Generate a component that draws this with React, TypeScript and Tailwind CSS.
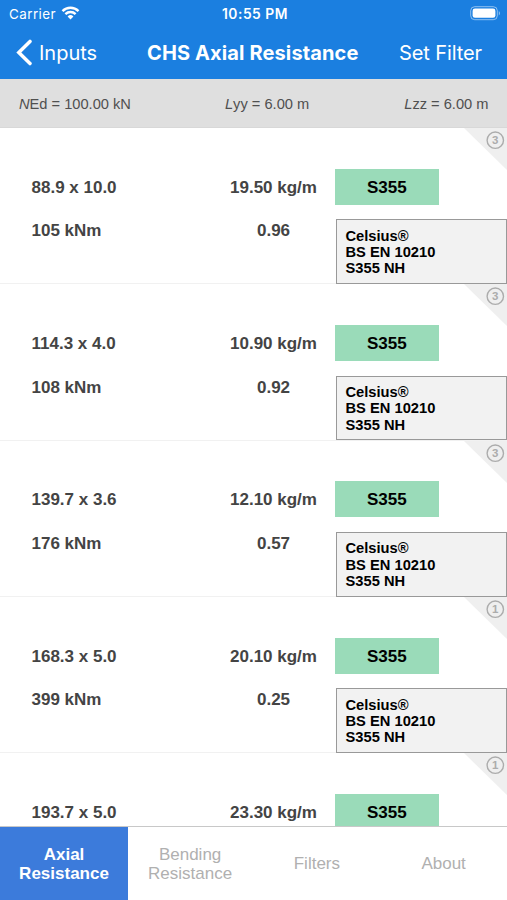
type Section = {
  size: string
  mass: string
  cls: number
  resistance?: string
  ratio?: string
}

const sections: Section[] = [
  { size: '88.9 x 10.0', mass: '19.50 kg/m', cls: 3, resistance: '105 kNm', ratio: '0.96' },
  { size: '114.3 x 4.0', mass: '10.90 kg/m', cls: 3, resistance: '108 kNm', ratio: '0.92' },
  { size: '139.7 x 3.6', mass: '12.10 kg/m', cls: 3, resistance: '176 kNm', ratio: '0.57' },
  { size: '168.3 x 5.0', mass: '20.10 kg/m', cls: 1, resistance: '399 kNm', ratio: '0.25' },
  { size: '193.7 x 5.0', mass: '23.30 kg/m', cls: 1 },
]

function StatusBar() {
  return (
    <div className="grid grid-cols-3 items-center h-[27px] pl-[9px] pr-[6px] text-[13.4px]">
      <div className="flex items-center gap-[5px] tracking-[0.45px]">
        <span className="pt-px">Carrier</span>
        <svg width="19" height="14" viewBox="0 0 18 14" fill="none" stroke="currentColor" strokeWidth="2.4">
          <path d="M1 5.1a11.4 11.4 0 0 1 16 0" />
          <path d="M3.9 8.1a7.3 7.3 0 0 1 10.2 0" />
          <path d="M9 13.4 6.1 10.4a4.1 4.1 0 0 1 5.8 0z" fill="currentColor" stroke="none" />
        </svg>
      </div>
      <span className="pt-px text-center text-[13.8px] font-semibold tracking-[0.55px] whitespace-nowrap">10:55 PM</span>
      <svg className="justify-self-end" width="31" height="15" viewBox="0 0 31 15">
        <rect x="0.7" y="0.7" width="26.6" height="13" rx="4" fill="none" stroke="#fff" strokeOpacity="0.5" />
        <rect x="2.6" y="2.6" width="22.8" height="9.2" rx="2.4" fill="#fff" />
        <path d="M28.8 5v4.4c1.6-.7 1.6-3.7 0-4.4z" fill="#fff" fillOpacity="0.5" />
      </svg>
    </div>
  )
}

function NavBar() {
  return (
    <div className="flex items-center h-[52px] pb-px pl-4 pr-[25px] text-[20px]">
      <button className="flex items-center w-[131px]">
        <svg width="17" height="27" viewBox="0 0 17 27" fill="none" stroke="currentColor" strokeWidth="3.5" strokeLinecap="round">
          <path d="M14 2.4 2.8 13.5 14 24.6" />
        </svg>
        <span className="ml-[6px]">Inputs</span>
      </button>
      <h1 className="font-bold tracking-[0.12px] whitespace-nowrap">CHS Axial Resistance</h1>
      <button className="ml-auto whitespace-nowrap tracking-[-0.1px]">Set Filter</button>
    </div>
  )
}

function SectionRow({ item }: { item: Section }) {
  return (
    <div className="relative shrink-0 h-[156.33px] pt-[40.8px] border-b border-[#f1f1f1] text-[17px] font-bold text-[#444]">
      <svg className="absolute right-0 top-0" width="43" height="43" viewBox="0 0 43 43">
        <path d="M0 0h43v42z" fill="#efefef" />
        <circle cx="31.3" cy="12.2" r="8.2" fill="none" stroke="#acacac" strokeWidth="1.4" />
        <text x="31.3" y="16.2" textAnchor="middle" fontSize="11.5" fontWeight="700" fill="#acacac">{item.cls}</text>
      </svg>
      <div className="flex items-center h-9">
        <span className="w-[212px] pt-px pl-[31.5px]">{item.size}</span>
        <span className="w-[123px] pt-px text-center">{item.mass}</span>
        <span className="flex items-center justify-center w-[103.5px] h-9 pt-px bg-[#9adbb9] text-black">S355</span>
      </div>
      {item.resistance && (
        <div className="flex mt-[14.5px] h-[64.8px]">
          <span className="w-[212px] pl-[31.5px] leading-[23px]">{item.resistance}</span>
          <span className="w-[123px] text-center leading-[23px]">{item.ratio}</span>
          <div className="relative ml-px flex-1 border border-[#999] bg-[#f2f2f2] pl-[8.5px] pt-[7.3px] text-[14.7px] leading-[16.3px] text-black">
            <p>Celsius®</p>
            <p>BS EN 10210</p>
            <p>S355 NH</p>
          </div>
        </div>
      )}
    </div>
  )
}

export default function App() {
  return (
    <div className="flex flex-col w-[507px] h-[900px] overflow-hidden bg-white font-['Liberation_Sans',sans-serif]">
      <header className="shrink-0 bg-[#1b7fe0] text-white font-['Inter',sans-serif]">
        <StatusBar />
        <NavBar />
      </header>
      <div className="flex shrink-0 items-center justify-between h-[49px] pt-[3px] pl-[19px] pr-[18.5px] border-b border-[#d8d8d8] bg-[#dfdfdf] text-[14.65px] text-[#505050]">
        <span><i>N</i>Ed = 100.00 kN</span>
        <span className="mr-[1px]"><i>L</i>yy = 6.00 m</span>
        <span><i>L</i>zz = 6.00 m</span>
      </div>
      <main className="flex flex-col flex-1 min-h-0 overflow-hidden">
        {sections.map(item => (
          <SectionRow key={item.size} item={item} />
        ))}
      </main>
      <nav className="grid grid-cols-4 shrink-0 h-[74px] border-t border-[#c8c8c8] bg-white text-[17px] leading-[19px] text-[#b0b0b0]">
        <button className="w-[128px] bg-[#3c7bdb] font-bold text-white">Axial<br />Resistance</button>
        <button>Bending<br />Resistance</button>
        <button>Filters</button>
        <button>About</button>
      </nav>
    </div>
  )
}
